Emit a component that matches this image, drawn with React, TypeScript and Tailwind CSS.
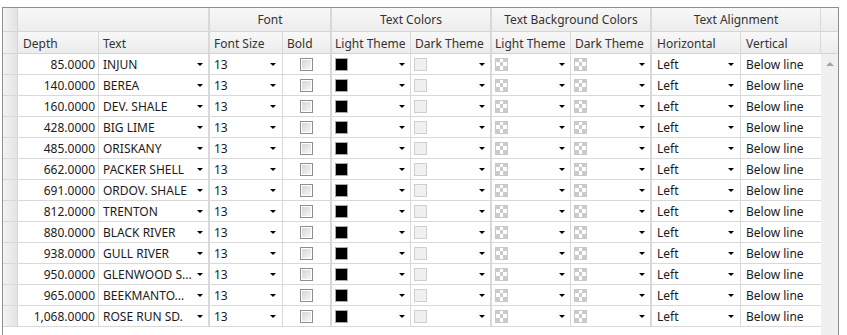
const rows: [string, string][] = [
  ['85.0000', 'INJUN'],
  ['140.0000', 'BEREA'],
  ['160.0000', 'DEV. SHALE'],
  ['428.0000', 'BIG LIME'],
  ['485.0000', 'ORISKANY'],
  ['662.0000', 'PACKER SHELL'],
  ['691.0000', 'ORDOV. SHALE'],
  ['812.0000', 'TRENTON'],
  ['880.0000', 'BLACK RIVER'],
  ['938.0000', 'GULL RIVER'],
  ['950.0000', 'GLENWOOD S...'],
  ['965.0000', 'BEEKMANTO...'],
  ['1,068.0000', 'ROSE RUN SD.'],
]

const line = 'border-r border-[#d9d9d9]'
const sep = 'border-r-2 border-[#d9d9d9]'
const rowHead = 'w-[15px] shrink-0 border-r border-[#d5d5d5] bg-gradient-to-r from-[#f4f4f4] to-[#e3e3e3]'
const headBg = 'bg-gradient-to-b from-[#f8f8f8] to-[#ececec]'

function Arrow() {
  return <span className="ml-auto h-0 w-0 border-x-[3px] border-t-[3px] border-x-transparent border-t-black" />
}

function Swatch({ kind }: { kind: 'black' | 'light' | 'checker' }) {
  if (kind === 'black') return <span className="h-[13px] w-[13px] border border-[#a8a8a8] bg-black" />
  if (kind === 'light') return <span className="h-[13px] w-[13px] border border-[#cfcfcf] bg-[#f0f0f0]" />
  return (
    <span className="grid h-[13px] w-[13px] grid-cols-3 grid-rows-3 border border-[#c8c8c8] bg-white">
      {[0, 1, 2, 3, 4, 5, 6, 7, 8].map((i) => (
        <span key={i} className={i % 2 === 0 ? 'bg-[#cbcbcb]' : 'bg-white'} />
      ))}
    </span>
  )
}

function Checkbox() {
  return (
    <span className="flex h-[13px] w-[13px] border border-[#8e8e8e] bg-white p-px">
      <span className="flex-1 bg-gradient-to-br from-[#d6d6d6] to-[#f6f6f6]" />
    </span>
  )
}

export default function App() {
  return (
    <div className="h-[335px] w-[847px] overflow-hidden bg-white pl-[2px] pt-[7px] text-[12px] text-[#1b1b1b]" style={{ fontFamily: '"Noto Sans", Arial, sans-serif' }}>
      <div className="flex h-[340px] w-[837px] flex-col border border-[#8c8f94]">
        {/* group header */}
        <div className={`flex h-[24px] border-b border-[#d5d5d5] text-[#333] ${headBg}`}>
          <div className={rowHead} />
          <div className={`w-[192px] ${sep}`} />
          <div className={`flex w-[122px] items-center justify-center ${sep}`}>Font</div>
          <div className={`flex w-[160px] items-center justify-center ${sep}`}>Text Colors</div>
          <div className={`flex w-[160px] items-center justify-center ${sep}`}>Text Background Colors</div>
          <div className={`flex w-[169px] items-center justify-center ${line}`}>Text Alignment</div>
          <div className="w-[17px]" />
        </div>
        {/* column header */}
        <div className={`flex h-[22px] border-b border-[#d5d5d5] pt-[2px] text-[#333] ${headBg}`}>
          <div className={`-mt-[2px] ${rowHead}`} />
          <div className={`-mt-[2px] flex w-[81px] items-center pl-[5px] pt-[2px] ${line}`}>Depth</div>
          <div className={`-mt-[2px] flex w-[111px] items-center pl-[4px] pt-[2px] ${sep}`}>Text</div>
          <div className={`-mt-[2px] flex w-[73px] items-center pl-[4px] pt-[2px] ${line}`}>Font Size</div>
          <div className={`-mt-[2px] flex w-[49px] items-center pl-[4px] pt-[2px] ${sep}`}>Bold</div>
          <div className={`-mt-[2px] flex w-[79px] items-center pl-[3px] pt-[2px] ${line}`}>Light Theme</div>
          <div className={`-mt-[2px] flex w-[81px] items-center pl-[4px] pt-[2px] ${sep}`}>Dark Theme</div>
          <div className={`-mt-[2px] flex w-[79px] items-center pl-[3px] pt-[2px] ${line}`}>Light Theme</div>
          <div className={`-mt-[2px] flex w-[81px] items-center pl-[4px] pt-[2px] ${sep}`}>Dark Theme</div>
          <div className={`-mt-[2px] flex w-[89px] items-center pl-[5px] pt-[2px] ${line}`}>Horizontal</div>
          <div className={`-mt-[2px] flex w-[80px] items-center pl-[5px] pt-[2px] ${line}`}>Vertical</div>
          <div className="w-[17px]" />
        </div>
        {/* body */}
        <div className="flex flex-1">
          <div className="flex w-[818px] flex-col">
            {rows.map(([depth, name]) => (
              <div key={depth} className="flex h-[21px] border-b border-[#d9d9d9]">
                <div className={rowHead} />
                <div className={`flex w-[81px] items-center justify-end pr-[3px] pt-[2px] ${line}`}>{depth}</div>
                <div className={`flex w-[111px] items-center pl-[4px] pr-[5px] ${sep}`}>
                  <span className="pt-[2px]">{name}</span>
                  <Arrow />
                </div>
                <div className={`flex w-[73px] items-center pl-[4px] pr-[6px] ${line}`}>
                  <span className="pt-[2px]">13</span>
                  <Arrow />
                </div>
                <div className={`flex w-[49px] items-center justify-center ${sep}`}>
                  <Checkbox />
                </div>
                <div className={`flex w-[79px] items-center pl-[3px] pr-[5px] ${line}`}>
                  <Swatch kind="black" />
                  <Arrow />
                </div>
                <div className={`flex w-[81px] items-center pl-[3px] pr-[5px] ${sep}`}>
                  <Swatch kind="light" />
                  <Arrow />
                </div>
                <div className={`flex w-[79px] items-center pl-[3px] pr-[5px] ${line}`}>
                  <Swatch kind="checker" />
                  <Arrow />
                </div>
                <div className={`flex w-[81px] items-center pl-[3px] pr-[5px] ${sep}`}>
                  <Swatch kind="checker" />
                  <Arrow />
                </div>
                <div className={`flex w-[89px] items-center pl-[5px] pr-[6px] ${line}`}>
                  <span className="pt-[2px]">Left</span>
                  <Arrow />
                </div>
                <div className="flex w-[80px] items-center pl-[5px] pt-[2px]">Below line</div>
              </div>
            ))}
          </div>
          <div className="flex w-[17px] justify-center bg-[#f0f0f0] pt-[8px]">
            <span className="h-0 w-0 border-x-[4px] border-b-[4px] border-x-transparent border-b-[#a3a3a3]" />
          </div>
        </div>
      </div>
    </div>
  )
}
